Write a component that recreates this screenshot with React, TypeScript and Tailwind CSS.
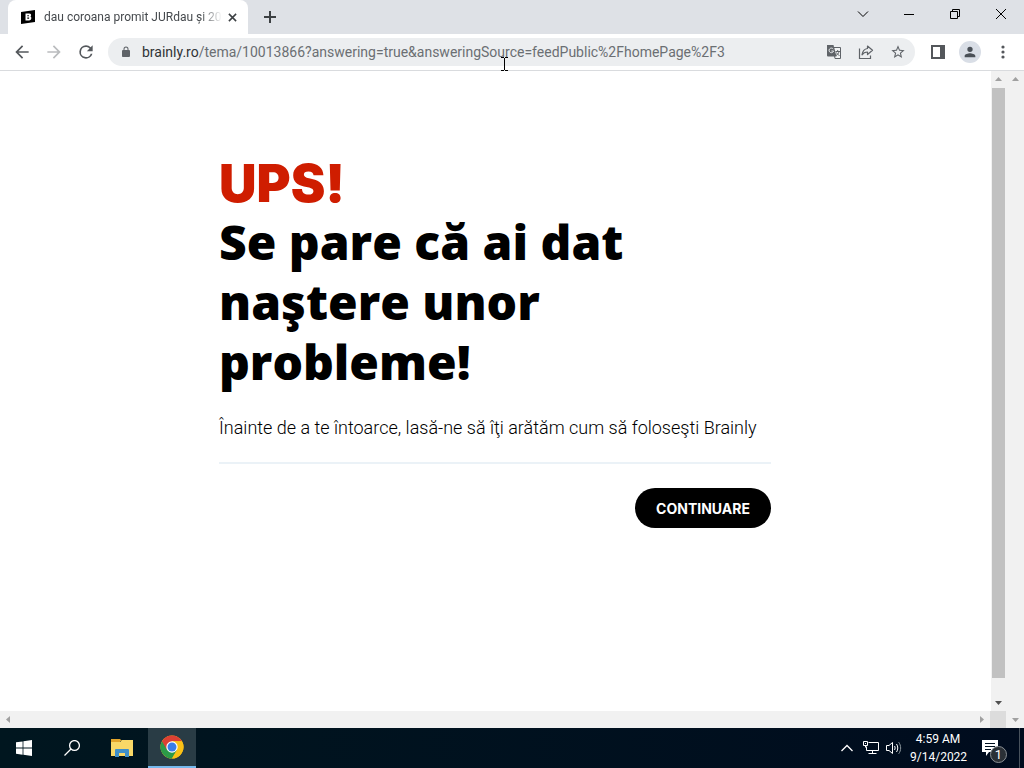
import React from 'react';

const ToolbarIcons = {
  back: 'M20 11H7.8l5.6-5.6L12 4l-8 8 8 8 1.4-1.4L7.8 13H20v-2z',
  forward: 'M12 4l-1.4 1.4 5.6 5.6H4v2h12.2l-5.6 5.6L12 20l8-8-8-8z',
  reload:
    'M17.65 6.35A7.96 7.96 0 0 0 12 4a8 8 0 1 0 7.73 10h-2.08A6 6 0 1 1 12 6c1.66 0 3.14.69 4.22 1.78L13 11h7V4l-2.35 2.35z',
  lock:
    'M18 8h-1V6A5 5 0 0 0 7 6v2H6a2 2 0 0 0-2 2v10c0 1.1.9 2 2 2h12a2 2 0 0 0 2-2V10a2 2 0 0 0-2-2zM9 6a3 3 0 0 1 6 0v2H9V6z',
  star:
    'M22 9.24l-7.19-.62L12 2 9.19 8.63 2 9.24l5.46 4.73L5.82 21 12 17.27 18.18 21l-1.63-7.03L22 9.24zM12 15.4l-3.76 2.27 1-4.28-3.32-2.88 4.38-.38L12 6.1l1.71 4.04 4.38.38-3.32 2.88 1 4.28L12 15.4z',
  person:
    'M12 12a4 4 0 1 0 0-8 4 4 0 0 0 0 8zm0 2c-2.67 0-8 1.34-8 4v2h16v-2c0-2.66-5.33-4-8-4z',
};

interface GlyphProps {
  d: string;
  className?: string;
}

const Glyph: React.FC<GlyphProps> = ({ d, className = 'w-5 h-5' }) => (
  <svg viewBox="0 0 24 24" fill="currentColor" className={className} aria-hidden="true">
    <path d={d} />
  </svg>
);

interface ArrowProps {
  direction: 'up' | 'down' | 'left' | 'right';
  className?: string;
}

const Arrow: React.FC<ArrowProps> = ({ direction, className = 'text-[#a0a0a0]' }) => {
  const points = {
    up: '1,6 4.5,2 8,6',
    down: '1,3 8,3 4.5,7',
    left: '6,1 6,8 2,4.5',
    right: '3,1 3,8 7,4.5',
  };
  return (
    <svg viewBox="0 0 9 9" className={`w-[9px] h-[9px] ${className}`} fill="currentColor" aria-hidden="true">
      <polygon points={points[direction]} />
    </svg>
  );
};

const TabStrip: React.FC = () => (
  <div className="flex h-[34px] items-end justify-between bg-[#dee1e6]">
    <div className="flex h-full items-end">
      <div className="ml-2 flex h-[34px] w-60 items-center rounded-t-lg bg-white pl-3 pr-2">
        <svg viewBox="0 0 16 16" className="h-4 w-4 shrink-0" aria-hidden="true">
          <path d="M1 3L15 1v12L1 15z" fill="#000" />
          <path d="M5.500 4.600h3.600c2 0 2.700 1.900 1.400 3 1.600 1.200.8 3.800-1.400 3.800H5.500z" fill="#fff" />
          <path d="M7.300 6.200h1.600v1H7.300zM7.300 8.600h1.800v1.200H7.300z" fill="#000" />
        </svg>
        <span className="ml-2 flex-1 whitespace-nowrap text-[12px] text-[#45494d] [mask-image:linear-gradient(to_right,black_88%,transparent)]">
          dau coroana promit JURdau și 20
        </span>
        <button aria-label="Close tab" className="ml-1 flex h-4 w-4 items-center justify-center">
          <svg viewBox="0 0 10 10" className="h-[9px] w-[9px]" stroke="#3c4043" strokeWidth="1.7">
            <path d="M1 1l8 8M9 1L1 9" />
          </svg>
        </button>
      </div>
      <button aria-label="New tab" className="ml-3 flex h-[34px] w-5 items-center justify-center">
        <svg viewBox="0 0 12 12" className="h-3 w-3" stroke="#3c4043" strokeWidth="2">
          <path d="M6 0v12M0 6h12" />
        </svg>
      </button>
    </div>
    <div className="flex h-7 self-start text-black">
      <button aria-label="Search tabs" className="flex w-[46px] items-center justify-center">
        <svg viewBox="0 0 12 12" className="h-3 w-3" fill="none" stroke="currentColor">
          <path d="M1 3.500l5 5 5-5" />
        </svg>
      </button>
      <button aria-label="Minimize" className="flex w-[46px] items-center justify-center">
        <svg viewBox="0 0 10 10" className="h-[10px] w-[10px]" fill="none" stroke="currentColor">
          <path d="M0 5.500h10" />
        </svg>
      </button>
      <button aria-label="Restore" className="flex w-[46px] items-center justify-center">
        <svg viewBox="0 0 10 10" className="h-[10px] w-[10px]" fill="none" stroke="currentColor">
          <path d="M.5 2.500h7v7h-7zM2.500 2.500v-2h7v7h-2" />
        </svg>
      </button>
      <button aria-label="Close" className="flex w-[46px] items-center justify-center">
        <svg viewBox="0 0 10 10" className="h-[10px] w-[10px]" fill="none" stroke="currentColor">
          <path d="M0 0l10 10M10 0L0 10" />
        </svg>
      </button>
    </div>
  </div>
);

const Toolbar: React.FC = () => (
  <div className="relative flex h-[37px] items-center border-b border-[#d9dbde] bg-white pl-3 pr-[11px] text-[#5f6368]">
    <div className="flex gap-3">
      <button aria-label="Back" className="text-[#54585c]">
        <Glyph d={ToolbarIcons.back} />
      </button>
      <button aria-label="Forward" className="text-[#babcbe]">
        <Glyph d={ToolbarIcons.forward} />
      </button>
      <button aria-label="Reload" className="text-[#54585c]">
        <Glyph d={ToolbarIcons.reload} />
      </button>
    </div>
    <div className="ml-3 flex h-7 flex-1 items-center rounded-full bg-[#eceef0] pl-3 pr-[9px]">
      <Glyph d={ToolbarIcons.lock} className="h-3 w-3 text-[#5f6368]" />
      <div className="ml-[10px] flex-1 whitespace-nowrap text-[14px]">
        <span className="text-[#303336]">brainly.ro</span>
        <span className="text-[#6b6f73]">/tema/10013866?answering=true&amp;answeringSource=feedPublic%2FhomePage%2F3</span>
      </div>
      <div className="flex items-center gap-4">
        <button aria-label="Translate this page">
          <svg viewBox="0 0 16 16" className="h-4 w-4" aria-hidden="true">
            <path d="M7 3.500h7.500v11H9z" fill="#f1f3f4" stroke="#5f6368" />
            <path d="M9.500 7.500h4.500M11.700 6v1.500M13 7.500c-.3 1.800-1.500 3.200-3 4M10.500 8.500c.6 1.500 1.700 2.400 3 3" fill="none" stroke="#5f6368" />
            <path d="M1 1h6.500l3 11.500H2a1 1 0 0 1-1-1z" fill="#5f6368" />
            <path d="M7.200 5A2.300 2.300 0 1 0 7.600 7H5.400" fill="none" stroke="#e8eaed" />
          </svg>
        </button>
        <button aria-label="Share this page">
          <svg viewBox="0 0 16 16" className="h-4 w-4" fill="none" stroke="#5f6368" strokeWidth="1.200" aria-hidden="true">
            <path d="M1.500 4.500v10h11v-3" />
            <path d="M9.500 2l5 4.300-5 4.200V8C7 8 5.300 8.800 4 10.800 4.500 7.500 6.300 5 9.500 4.500z" strokeLinejoin="round" />
          </svg>
        </button>
        <button aria-label="Bookmark this tab">
          <Glyph d={ToolbarIcons.star} className="h-4 w-4" />
        </button>
      </div>
    </div>
    <button aria-label="Side panel" className="ml-4">
      <svg viewBox="0 0 14 14" className="h-[14px] w-[14px]" aria-hidden="true">
        <path d="M1 1h12v12H1z" fill="#fff" stroke="#54575b" strokeWidth="2" />
        <path d="M9 1h4v12H9z" fill="#54575b" />
      </svg>
    </button>
    <button
      aria-label="Profile"
      className="ml-[14px] flex h-[22px] w-[22px] items-center justify-center rounded-full bg-[#d9dee6] text-[#4a5057]"
    >
      <Glyph d={ToolbarIcons.person} className="h-4 w-4" />
    </button>
    <button aria-label="Menu" className="ml-3 flex w-5 justify-center">
      <svg viewBox="0 0 4 14" className="h-[14px] w-1" fill="#54575b" aria-hidden="true">
        <circle cx="2" cy="2" r="1.600" />
        <circle cx="2" cy="7" r="1.600" />
        <circle cx="2" cy="12" r="1.600" />
      </svg>
    </button>
    {/* Text cursor hovering over the address bar */}
    <svg
      viewBox="0 0 7 14"
      className="absolute left-[501px] top-[23px] h-[14px] w-[7px]"
      fill="none"
      stroke="#000"
      aria-hidden="true"
    >
      <path d="M0 .5h3M4 .5h3M3.500 1v12M0 13.500h3M4 13.500h3" />
    </svg>
  </div>
);

const ErrorPage: React.FC = () => (
  <main className="flex-1 bg-white px-[219px] pt-[84px] text-black">
    <div className="max-w-[552px]">
      <h1>
        <span className="block font-['Inter','Liberation_Sans',sans-serif] text-[52px] font-black leading-[57px] text-[#cf1d00]">
          UPS!
        </span>
        <span className="block max-w-[440px] font-['Open_Sans','Liberation_Sans',sans-serif] text-[48px] font-extrabold leading-[60px]">
          Se pare că ai dat naştere unor probleme!
        </span>
      </h1>
      <p className="mt-[22px] font-['Roboto','Liberation_Sans',sans-serif] text-[18px] font-light leading-7">
        Înainte de a te întoarce, lasă-ne să îţi arătăm cum să foloseşti Brainly
      </p>
      <hr className="mt-5 border-t-2 border-[#ebf2f7]" />
      <div className="mt-6 flex justify-end">
        <button className="h-10 rounded-full bg-black px-[21px] font-['Inter','Liberation_Sans',sans-serif] text-[14px] font-bold text-white">
          CONTINUARE
        </button>
      </div>
    </div>
  </main>
);

const Viewport: React.FC = () => (
  <div className="flex min-h-0 flex-1 bg-[#f1f1f1]">
    <div className="flex flex-1 flex-col">
      <div className="flex min-h-0 flex-1">
        <ErrorPage />
        <div className="flex w-[15px] flex-col items-center bg-[#f1f1f1]">
          <div className="flex h-[17px] items-center">
            <Arrow direction="up" />
          </div>
          <div className="w-[13px] flex-1 bg-[#c1c1c1]" />
          <div className="flex h-[33px] items-end pb-1">
            <Arrow direction="down" className="text-[#505050]" />
          </div>
        </div>
      </div>
      <div className="flex h-[17px] items-center">
        <div className="flex flex-1 items-center justify-between pl-1 pr-1">
          <Arrow direction="left" />
          <Arrow direction="right" />
        </div>
        <div className="h-full w-4 bg-[#dcdcdc]" />
      </div>
    </div>
    <div className="flex w-[18px] flex-col items-center justify-between py-1">
      <Arrow direction="up" />
      <Arrow direction="down" />
    </div>
  </div>
);

const Taskbar: React.FC = () => (
  <div className="flex h-10 justify-between bg-linear-to-r from-[#00161f] to-[#000c1e] text-white">
    <div className="flex">
      <button aria-label="Start" className="flex w-12 items-center justify-center">
        <svg viewBox="0 0 16 16" className="h-4 w-4" fill="#fff" aria-hidden="true">
          <path d="M0 2.300l6.600-.9v6.200H0zM7.400 1.300L16 0v7.600H7.400zM0 8.400h6.600v6.300L0 13.800zM7.400 8.400H16V16l-8.600-1.200z" />
        </svg>
      </button>
      <button aria-label="Search" className="flex w-12 items-center justify-center">
        <svg viewBox="0 0 16 16" className="h-4 w-4" fill="none" stroke="#fff" strokeWidth="1.300" aria-hidden="true">
          <circle cx="10.500" cy="5.500" r="4.900" />
          <path d="M7 9L.5 15.500" />
        </svg>
      </button>
      <button aria-label="File Explorer" className="flex w-[52px] items-center justify-center">
        <svg viewBox="0 0 22 18" className="h-[18px] w-[22px]" aria-hidden="true">
          <path d="M0 0h9l2 2h-2v4H0z" fill="#e3a52b" />
          <path d="M0 3h9l2-2h11v16H0z" fill="#f9d867" />
          <path d="M4 18v-7a1 1 0 0 1 1-1h12a1 1 0 0 1 1 1v7h-4v-4H8v4z" fill="#3f8fc8" />
        </svg>
      </button>
      <button
        aria-label="Google Chrome"
        className="flex w-12 items-center justify-center border-b-2 border-[#76b9ed] bg-[#293c45]"
      >
        <svg viewBox="0 0 24 24" className="h-6 w-6" aria-hidden="true">
          <circle cx="12" cy="12" r="11.500" fill="#fbc116" />
          <path d="M12 12L2.040 6.250A11.500 11.500 0 0 0 12 23.500l4.980-8.620z" fill="#2c9a48" />
          <path d="M2.040 6.250A11.500 11.500 0 0 1 21.960 6.250L12 6.250V12l-4.980 2.880z" fill="#dd4033" />
          <path d="M12 6.250h9.960A11.500 11.500 0 0 1 12 23.500l4.980-8.620z" fill="#fbc116" />
          <circle cx="12" cy="12" r="5.700" fill="#fff" />
          <circle cx="12" cy="12" r="4.500" fill="#3b7de8" />
        </svg>
      </button>
    </div>
    <div className="flex items-center">
      <button aria-label="Show hidden icons">
        <svg viewBox="0 0 12 8" className="h-2 w-3" fill="none" stroke="#fff" strokeWidth="1.300">
          <path d="M.5 7L6 1.500 11.500 7" />
        </svg>
      </button>
      <button aria-label="Network" className="ml-[10px]">
        <svg viewBox="0 0 16 14" className="h-[14px] w-4" fill="none" stroke="#fff">
          <path d="M5.500 1.500h10v8h-12v-4" />
          <path d="M.5.500h4v4h-4zM2.500 2v1M2.500 4.500v2M9.500 9.500v3M5.500 12.500h8" />
        </svg>
      </button>
      <button aria-label="Volume" className="ml-[7px]">
        <svg viewBox="0 0 16 14" className="h-[14px] w-4" fill="none" stroke="#fff">
          <path d="M.5 4.500h2.500l3.500-3v11l-3.500-3H.5z" />
          <path d="M8.500 5c.8 1.200.8 2.800 0 4M10.500 3c1.700 2.400 1.700 5.600 0 8" />
          <path d="M12.700 1.200c2.600 3.500 2.600 8.100 0 11.600" stroke="#8a959b" />
        </svg>
      </button>
      <div className="ml-2 w-[56px] text-center text-[12px] leading-[18px] whitespace-nowrap">
        <div>4:59 AM</div>
        <div>9/14/2022</div>
      </div>
      <button aria-label="Notifications" className="relative ml-4 mr-[13px] h-6 w-6">
        <svg viewBox="0 0 16 16" className="mt-1 mb-1 h-4 w-4" aria-hidden="true">
          <path d="M0 0h16v12H7l-3 4v-4H0z" fill="#fff" />
          <path d="M3 3.500h10M3 6.500h10M3 9.500h6" stroke="#00101f" />
        </svg>
        <span className="absolute left-2 top-[10px] flex h-[17px] w-[17px] items-center justify-center rounded-full border border-[#8a9095] bg-[#2a3036] text-[13px]">
          1
        </span>
      </button>
      <div className="mr-1 h-full w-px bg-[#48525c]" />
    </div>
  </div>
);

export default function App() {
  return (
    <div className="flex h-screen flex-col overflow-hidden font-['Roboto','Noto_Sans',sans-serif]">
      <TabStrip />
      <Toolbar />
      <Viewport />
      <Taskbar />
    </div>
  );
}
